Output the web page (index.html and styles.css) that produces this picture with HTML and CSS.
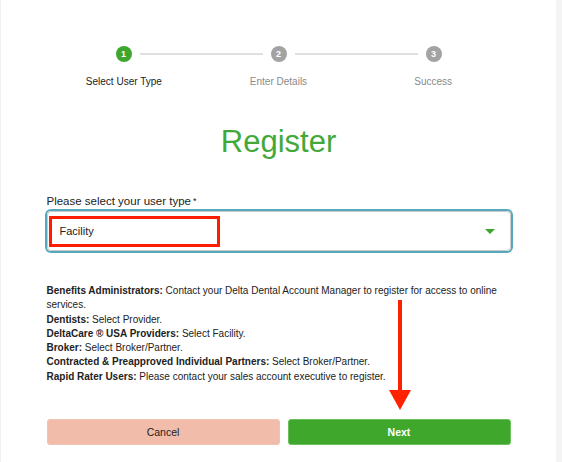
FILE: index.html
```html
<!DOCTYPE html>
<html lang="en">
<head>
<meta charset="utf-8">
<title>Register</title>
<link rel="stylesheet" href="styles.css">
</head>
<body>
<div class="page">
  <div class="container">
    <div class="stepper">
      <span class="dot active">1</span>
      <span class="line"></span>
      <span class="dot">2</span>
      <span class="line"></span>
      <span class="dot">3</span>
    </div>
    <div class="step-labels">
      <span class="current">Select User Type</span>
      <span>Enter Details</span>
      <span>Success</span>
    </div>
    <h1 class="title">Register</h1>
    <label class="field-label">Please select your user type<span class="req">*</span></label>
    <div class="select">
      <div class="highlight">Facility</div>
      <span class="caret"></span>
    </div>
    <div class="info">
      <p><b>Benefits Administrators:</b> Contact your Delta Dental Account Manager to register for access to online services.</p>
      <p><b>Dentists:</b> Select Provider.</p>
      <p><b>DeltaCare ® USA Providers:</b> Select Facility.</p>
      <p><b>Broker:</b> Select Broker/Partner.</p>
      <p><b>Contracted &amp; Preapproved Individual Partners:</b> Select Broker/Partner.</p>
      <p><b>Rapid Rater Users:</b> Please contact your sales account executive to register.</p>
    </div>
    <div class="actions">
      <button class="btn cancel">Cancel</button>
      <button class="btn next">Next</button>
    </div>
  </div>
  <svg class="arrow" width="24" height="112" viewBox="0 0 24 112">
    <rect x="10" y="0" width="4" height="92" fill="#ff2200"/>
    <polygon points="1,90 23,90 12,110" fill="#ff2200"/>
  </svg>
</div>
</body>
</html>
```
FILE: styles.css
```css
* { box-sizing: border-box; }
html, body { margin: 0; padding: 0; }
body {
  background: #f4f4f4;
  font-family: "Liberation Sans", Arial, Helvetica, sans-serif;
  color: #222;
}
.page {
  position: relative;
  width: 556px;
  min-height: 462px;
  background: #fff;
  border-left: 1px solid #f0f0f0;
}
.container {
  width: 464px;
  margin: 0 auto;
  padding-top: 46px;
}
.stepper {
  display: flex;
  align-items: center;
  padding: 0 69px;
  height: 16px;
}
.dot {
  width: 16px;
  height: 16px;
  border-radius: 50%;
  background: #a3a3a3;
  color: #fff;
  font-size: 9px;
  font-weight: bold;
  display: flex;
  align-items: center;
  justify-content: center;
  flex: none;
}
.dot.active { background: #3ea62e; }
.line {
  flex: 1;
  height: 2px;
  background: #e0e0e0;
  margin: 0 8px;
}
.step-labels {
  display: grid;
  grid-template-columns: repeat(3, 1fr);
  margin-top: 13px;
  font-size: 10px;
  line-height: 14px;
  color: #8a8a8a;
  text-align: center;
}
.step-labels .current { color: #222; }
.title {
  margin: 35px 0 0;
  font-size: 31px;
  line-height: 36px;
  font-weight: normal;
  color: #43a83a;
  text-align: center;
}
.field-label {
  display: block;
  margin-top: 34px;
  font-size: 11.5px;
  line-height: 14px;
  color: #222;
}
.req { font-size: 9px; vertical-align: top; margin-left: 2px; }
.select {
  margin-top: 3px;
  height: 40px;
  border: 1px solid #c9c9c9;
  border-radius: 4px;
  box-shadow: 0 0 0 2px #56a8bf;
  display: flex;
  align-items: center;
  padding: 0 15px 0 1px;
}
.highlight {
  width: 171px;
  height: 31px;
  border: 3px solid #ff1d00;
  padding-left: 8px;
  display: flex;
  align-items: center;
  font-size: 11px;
  color: #222;
}
.caret {
  margin-left: auto;
  width: 0;
  height: 0;
  border-left: 5px solid transparent;
  border-right: 5px solid transparent;
  border-top: 5px solid #3ea62e;
}
.info {
  margin-top: 33px;
  font-size: 10px;
  line-height: 14.3px;
  color: #222;
}
.info p { margin: 0; }
.actions {
  display: flex;
  gap: 8px;
  margin-top: 35px;
}
.btn {
  height: 26px;
  border-radius: 3px;
  font-family: inherit;
  font-size: 10.5px;
  border: 1px solid transparent;
  padding: 0;
}
.cancel {
  width: 233px;
  background: #f2bcab;
  border-color: #f0c4b5;
  color: #222;
}
.next {
  flex: 1;
  background: #3fa72b;
  border-color: #6cc05c;
  color: #fff;
  font-weight: bold;
}
.arrow {
  position: absolute;
  left: 387px;
  top: 300px;
}
```
